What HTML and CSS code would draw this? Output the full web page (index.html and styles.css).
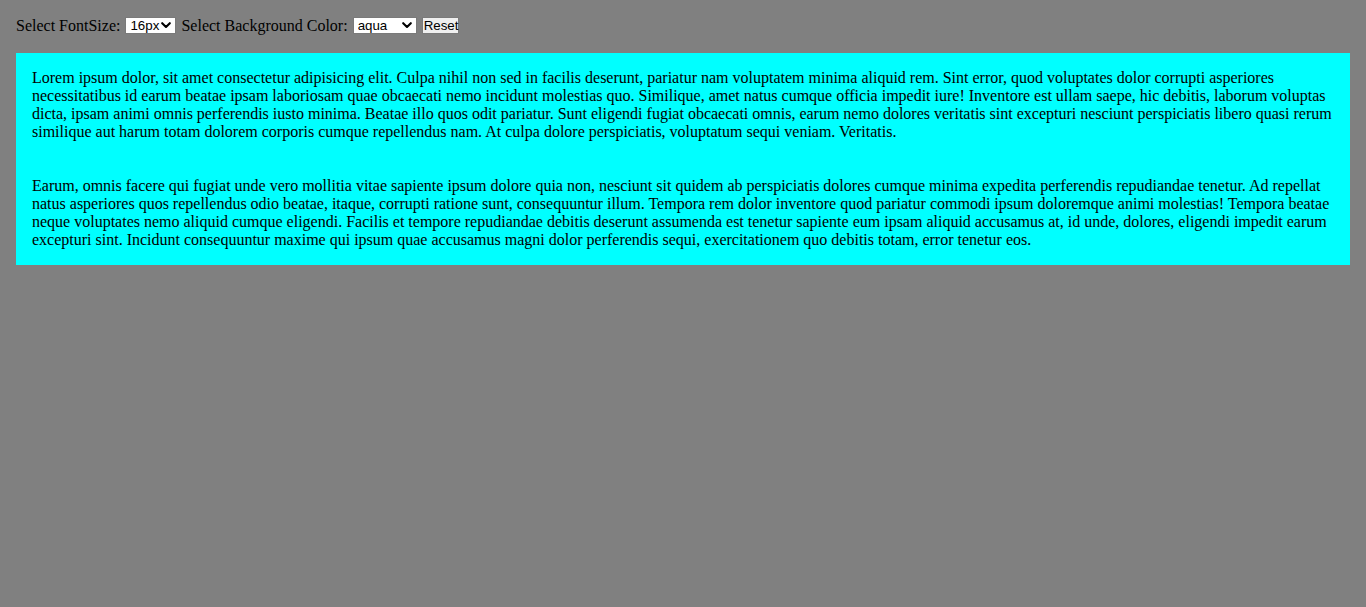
FILE: index.html
```html
<!DOCTYPE html>
<html>
<head>
<meta charset="utf-8">
<title>Font Size and Background</title>
<link rel="stylesheet" href="styles.css">
</head>
<body>
<div class="controls">
  <label for="fs">Select FontSize:</label>
  <span class="sel">
    <select id="fs" class="ctl">
      <option>12px</option>
      <option>14px</option>
      <option selected>16px</option>
      <option>18px</option>
      <option>20px</option>
    </select>
    <svg class="chev" width="10" height="7" viewBox="0 0 10 7" aria-hidden="true"><path d="M1.2 1.2 L5 5 L8.8 1.2" fill="none" stroke="#000" stroke-width="2.1" stroke-linecap="round" stroke-linejoin="round"/></svg>
  </span>
  <label for="bg">Select Background Color:</label>
  <span class="sel">
    <select id="bg" class="ctl ctl-wide">
      <option selected>aqua</option>
      <option>yellow</option>
      <option>pink</option>
      <option>white</option>
    </select>
    <svg class="chev" width="10" height="7" viewBox="0 0 10 7" aria-hidden="true"><path d="M1.2 1.2 L5 5 L8.8 1.2" fill="none" stroke="#000" stroke-width="2.1" stroke-linecap="round" stroke-linejoin="round"/></svg>
  </span>
  <button class="ctl btn" type="button">Reset</button>
</div>
<div class="box">
  <p class="para">Lorem ipsum dolor, sit amet consectetur adipisicing elit. Culpa nihil non sed in facilis deserunt, pariatur nam voluptatem minima aliquid rem. Sint error, quod voluptates dolor corrupti asperiores necessitatibus id earum beatae ipsam laboriosam quae obcaecati nemo incidunt molestias quo. Similique, amet natus cumque officia impedit iure! Inventore est ullam saepe, hic debitis, laborum voluptas dicta, ipsam animi omnis perferendis iusto minima. Beatae illo quos odit pariatur. Sunt eligendi fugiat obcaecati omnis, earum nemo dolores veritatis sint excepturi nesciunt perspiciatis libero quasi rerum similique aut harum totam dolorem corporis cumque repellendus nam. At culpa dolore perspiciatis, voluptatum sequi veniam. Veritatis.</p>
  <p class="para">Earum, omnis facere qui fugiat unde vero mollitia vitae sapiente ipsum dolore quia non, nesciunt sit quidem ab perspiciatis dolores cumque minima expedita perferendis repudiandae tenetur. Ad repellat natus asperiores quos repellendus odio beatae, itaque, corrupti ratione sunt, consequuntur illum. Tempora rem dolor inventore quod pariatur commodi ipsum doloremque animi molestias! Tempora beatae neque voluptates nemo aliquid cumque eligendi. Facilis et tempore repudiandae debitis deserunt assumenda est tenetur sapiente eum ipsam aliquid accusamus at, id unde, dolores, eligendi impedit earum excepturi sint. Incidunt consequuntur maxime qui ipsum quae accusamus magni dolor perferendis sequi, exercitationem quo debitis totam, error tenetur eos.</p>
</div>
</body>
</html>
```

FILE: styles.css
```css
html {
  background: #808080;
}
body {
  margin: 0;
  padding: 16px;
  background: #808080;
  font-family: "Liberation Serif", "Times New Roman", serif;
  font-size: 16px;
  color: #000;
}
.controls {
  display: flex;
  align-items: center;
  gap: 5px;
  height: 19px;
  margin-bottom: 18px;
}
.ctl {
  font-family: "Liberation Sans", Arial, sans-serif;
  font-size: 13.333px;
  height: 17px;
  box-sizing: border-box;
  color: #000;
  margin: 0;
}
.sel {
  position: relative;
  display: inline-flex;
}
select.ctl {
  -webkit-appearance: none;
  appearance: none;
  width: 51px;
  background: #fff;
  border: 1px solid #7a7a7a;
  border-radius: 0;
  padding: 0 0 0 4px;
  line-height: 15px;
  cursor: pointer;
}
select.ctl-wide {
  width: 64px;
}
.chev {
  position: absolute;
  right: 5px;
  top: 5px;
  pointer-events: none;
}
.btn {
  background: #efefef;
  border: 1px solid #7a7a7a;
  border-radius: 0;
  padding: 0 1px;
  width: 37px;
  line-height: 13px;
}
.box {
  background: #00ffff;
  padding: 16px;
  display: flex;
  flex-direction: column;
  gap: 36px;
}
.para {
  margin: 0;
  line-height: 18px;
}
```
